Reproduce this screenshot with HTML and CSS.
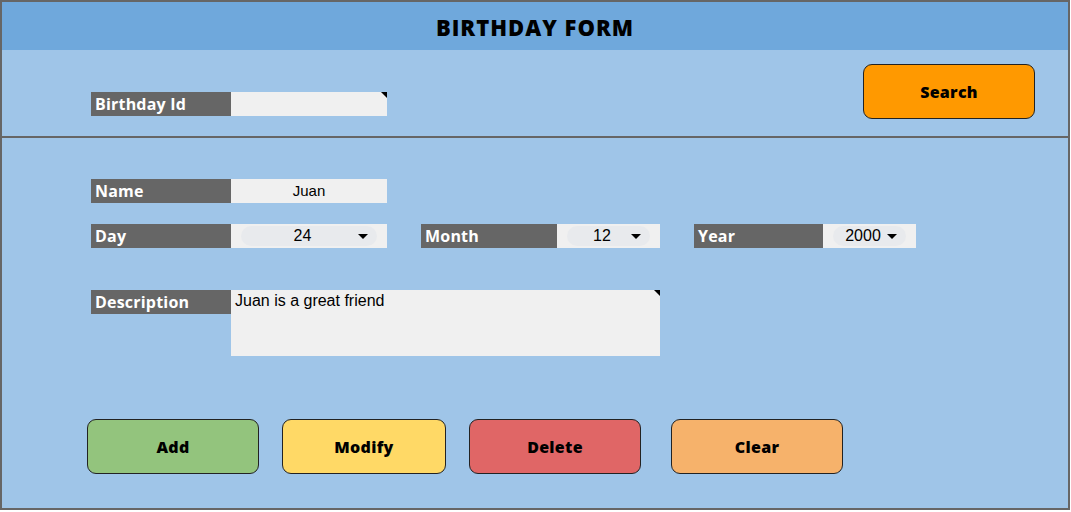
FILE: index.html
```html
<!DOCTYPE html>
<html lang="en">
<head>
    <meta charset="UTF-8">
    <title>Birthday Form</title>
    <link rel="stylesheet" href="styles.css">
</head>
<body>
    <div class="sheet">
        <div class="title">BIRTHDAY FORM</div>

        <div class="search-bar">
            <div class="row id-row">
                <span class="label wide">Birthday Id</span>
                <span class="field name-field note"></span>
            </div>
            <button class="btn search">Search</button>
        </div>

        <div class="form">
            <div class="row">
                <span class="label wide">Name</span>
                <span class="field name-field center">Juan</span>
            </div>

            <div class="row date-row">
                <div class="row">
                    <span class="label wide">Day</span>
                    <span class="field name-field">
                        <span class="chip"><span class="val">24</span><span class="arrow"></span></span>
                    </span>
                </div>
                <div class="row">
                    <span class="label month">Month</span>
                    <span class="field month-field">
                        <span class="chip"><span class="val">12</span><span class="arrow"></span></span>
                    </span>
                </div>
                <div class="row">
                    <span class="label year">Year</span>
                    <span class="field year-field">
                        <span class="chip"><span class="val">2000</span><span class="arrow"></span></span>
                    </span>
                </div>
            </div>

            <div class="row desc-row">
                <span class="label wide">Description</span>
                <span class="field desc-field note">Juan is a great friend</span>
            </div>

            <div class="actions">
                <button class="btn add">Add</button>
                <button class="btn modify">Modify</button>
                <button class="btn delete">Delete</button>
                <button class="btn clear">Clear</button>
            </div>
        </div>
    </div>
</body>
</html>
```

FILE: styles.css
```css
body {
    margin: 0;
    background-color: #ffffff;
    font-family: "Open Sans", "Liberation Sans", sans-serif;
}

.sheet {
    width: 1066px;
    height: 506px;
    border: 2px solid #666666;
    background-color: #9fc5e8;
}

.title {
    height: 48px;
    line-height: 50px;
    background-color: #6fa8dc;
    text-align: center;
    font-size: 22px;
    font-weight: 800;
    letter-spacing: 1px;
    color: #000;
}

.search-bar {
    height: 86px;
    display: flex;
    align-items: flex-start;
    padding-left: 89px;
    border-bottom: 2px solid #666666;
}

.id-row {
    margin-top: 42px;
}

.row {
    display: flex;
}

.label {
    height: 24px;
    line-height: 25px;
    padding-left: 4px;
    background-color: #666666;
    color: #fff;
    font-size: 16px;
    font-weight: 700;
    letter-spacing: 0.2px;
    box-sizing: border-box;
}

.label.wide { width: 140px; }
.label.month { width: 136px; }
.label.year { width: 129px; }

.field {
    height: 24px;
    background-color: #f0f0f0;
    font-family: "Liberation Sans", Arial, sans-serif;
    font-size: 15px;
    color: #000;
    position: relative;
    box-sizing: border-box;
    display: flex;
    align-items: center;
    justify-content: center;
}

.name-field { width: 156px; }
.month-field { width: 103px; }
.year-field { width: 93px; }

.center {
    line-height: 24px;
}

/* comment marker in the top right corner */
.note::after {
    content: "";
    position: absolute;
    top: 0;
    right: 0;
    border-top: 6px solid #000;
    border-left: 6px solid transparent;
}

.chip {
    width: calc(100% - 20px);
    height: 20px;
    border-radius: 10px;
    background-color: #e8eaed;
    display: flex;
    align-items: center;
    justify-content: flex-end;
    padding-right: 9px;
    box-sizing: border-box;
    font-size: 16px;
}

.chip .val {
    flex: 1;
    text-align: center;
    padding-left: 12px;
}

.arrow {
    width: 0;
    height: 0;
    border-left: 5px solid transparent;
    border-right: 5px solid transparent;
    border-top: 5px solid #000;
    margin-left: 6px;
}

.form {
    padding: 41px 0 0 89px;
}

.date-row {
    margin-top: 21px;
    gap: 34px;
}

.desc-row {
    margin-top: 42px;
}

.desc-field {
    width: 429px;
    height: 66px;
    align-items: flex-start;
    justify-content: flex-start;
    padding: 2px 4px;
    font-size: 16px;
}

.actions {
    display: flex;
    margin-top: 63px;
    margin-left: -4px;
}

.btn {
    height: 55px;
    width: 172px;
    border: 1px solid #222;
    border-radius: 9px;
    font-family: "Open Sans", "Liberation Sans", sans-serif;
    font-size: 16px;
    font-weight: 800;
    letter-spacing: 0.3px;
    color: #000;
    cursor: pointer;
    margin-right: 23px;
}

.search {
    margin: 14px 33px 0 auto;
    background-color: #ff9900;
}

.add { background-color: #93c47d; }
.modify { background-color: #ffd966; width: 164px; }
.delete { background-color: #e06666; margin-right: 30px; }
.clear { background-color: #f6b26b; }
```
